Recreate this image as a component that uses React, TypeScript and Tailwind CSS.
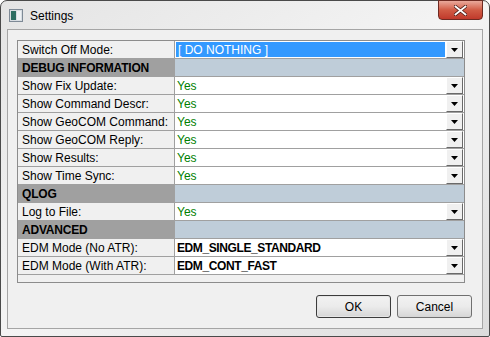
type Row =
  | { kind: "cat"; label: string }
  | { kind: "prop"; label: string; value: string; tone: "sel" | "yes" | "bold" };

const ROWS: Row[] = [
  { kind: "prop", label: "Switch Off Mode:", value: "[ DO NOTHING ]", tone: "sel" },
  { kind: "cat", label: "DEBUG INFORMATION" },
  { kind: "prop", label: "Show Fix Update:", value: "Yes", tone: "yes" },
  { kind: "prop", label: "Show Command Descr:", value: "Yes", tone: "yes" },
  { kind: "prop", label: "Show GeoCOM Command:", value: "Yes", tone: "yes" },
  { kind: "prop", label: "Show GeoCOM Reply:", value: "Yes", tone: "yes" },
  { kind: "prop", label: "Show Results:", value: "Yes", tone: "yes" },
  { kind: "prop", label: "Show Time Sync:", value: "Yes", tone: "yes" },
  { kind: "cat", label: "QLOG" },
  { kind: "prop", label: "Log to File:", value: "Yes", tone: "yes" },
  { kind: "cat", label: "ADVANCED" },
  { kind: "prop", label: "EDM Mode (No ATR):", value: "EDM_SINGLE_STANDARD", tone: "bold" },
  { kind: "prop", label: "EDM Mode (With ATR):", value: "EDM_CONT_FAST", tone: "bold" },
];

const DropButton = () => (
  <div className="w-[17px] h-[17px] shrink-0 bg-[#f0f0f0] border-t border-l border-t-white border-l-white border-b border-r border-b-[#696969] border-r-[#696969] flex items-center justify-center">
    <svg width="7" height="4" viewBox="0 0 7 4">
      <polygon points="0,0 7,0 3.5,4" fill="#000" />
    </svg>
  </div>
);

const GridRow = ({ row }: { row: Row }) => {
  if (row.kind === "cat") {
    return (
      <div className="flex h-[18px] border-b border-[#a0a0a0]">
        <div className="w-[157px] shrink-0 bg-[#a0a0a0] font-bold tracking-[-0.2px] pl-[4px] flex items-center border-r border-[#a0a0a0]">
          {row.label}
        </div>
        <div className="flex-1 bg-[#bfcdd9]" />
      </div>
    );
  }
  const valueCls =
    row.tone === "sel"
      ? "bg-[#3399ff] text-white border border-white"
      : row.tone === "yes"
        ? "bg-white text-[#008000]"
        : "bg-white text-black font-bold tracking-[-0.4px]";
  return (
    <div className="flex h-[18px] border-b border-[#a0a0a0]">
      <div className="w-[157px] shrink-0 bg-[#f0f0f0] pl-[4px] flex items-center border-r border-[#a0a0a0]">
        {row.label}
      </div>
      <div className={`flex-1 flex items-center pl-[2px] ${valueCls}`}>{row.value}</div>
      <div className="bg-white flex items-start pr-[1px]">
        <DropButton />
      </div>
    </div>
  );
};

const WinButton = ({ label, isDefault }: { label: string; isDefault?: boolean }) => (
  <div
    className={`w-[75px] h-[23px] rounded-[3px] flex items-center justify-center bg-gradient-to-b from-[#f2f2f2] via-[#ebebeb] to-[#d6d6d6] ${
      isDefault ? "border border-[#3c3c3c] shadow-[inset_0_0_0_1px_#e6e6e6]" : "border border-[#707070]"
    }`}
  >
    {label}
  </div>
);

export default function App() {
  return (
    <div className="w-[490px] h-[337px] font-['Liberation_Sans',Arial,sans-serif] text-[12px] text-black">
      <div className="w-full h-full flex flex-col border border-[#4a4a4a] rounded-t-[7px] rounded-b-[2px] bg-gradient-to-br from-[#e4e4e4] via-[#f4f4f4] to-[#dcdcdc] px-[6px] pb-[7px]">
        <div className="h-[28px] flex items-start justify-between">
          <div className="flex items-center gap-[7px] pl-[2px] pt-[8px]">
            <svg width="14" height="13" viewBox="0 0 14 13">
              <rect x="0.5" y="0.5" width="13" height="12" fill="#d8dde2" stroke="#7e8a96" />
              <rect x="2" y="2" width="5" height="9" fill="#2c6e63" />
              <rect x="8" y="2" width="4" height="9" fill="#eef2f5" />
            </svg>
            <span className="leading-none">Settings</span>
          </div>
          <div className="w-[45px] h-[20px] -mt-[1px] rounded-b-[4px] border border-[#6e2a22] bg-gradient-to-b from-[#e9a99c] via-[#d15b45] to-[#c0392b] flex items-center justify-center">
            <svg width="13" height="11" viewBox="0 0 13 11">
              <path d="M1.5 1.5 L11.5 9.5 M11.5 1.5 L1.5 9.5" stroke="#4a1a14" strokeWidth="3.4" strokeLinecap="square" />
              <path d="M1.5 1.5 L11.5 9.5 M11.5 1.5 L1.5 9.5" stroke="#ffffff" strokeWidth="1.8" strokeLinecap="square" />
            </svg>
          </div>
        </div>
        <div className="flex-1 border border-[#a5a5a5] bg-[#f0f0f0] pt-[10px] pl-[9px] flex flex-col">
          <div className="w-[448px] h-[243px] border border-[#8c8c8c] bg-[#f0f0f0] flex flex-col">
            {ROWS.map((r) => (
              <GridRow key={r.label} row={r} />
            ))}
          </div>
          <div className="flex justify-end gap-[6px] pr-[10px] mt-[12px]">
            <WinButton label="OK" isDefault />
            <WinButton label="Cancel" />
          </div>
        </div>
      </div>
    </div>
  );
}
